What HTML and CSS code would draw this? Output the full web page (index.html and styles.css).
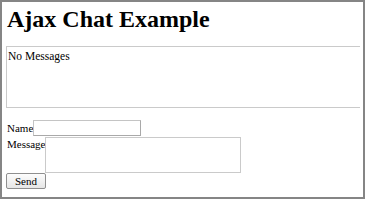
FILE: index.html
```html
<!DOCTYPE html>
<html lang="en">
  <head>
    <meta charset="UTF-8" />
    <title>Ajax Chat Example</title>
    <link rel="stylesheet" href="styles.css">
  </head>
  <body>
    <div class="frame">
      <h1 class="title">Ajax Chat Example</h1>
      <div id="messages" class="messages">No Messages</div>
      <form class="chat-form">
        <div class="row name-row">
          <label for="name">Name</label>
          <input type="text" id="name" name="name" />
        </div>
        <div class="row message-row">
          <label for="message">Message</label>
          <textarea id="message" name="message"></textarea>
        </div>
        <button type="button" class="send">Send</button>
      </form>
    </div>
  </body>
</html>
```

FILE: styles.css
```css
:root {
  --frame-color: #858585;
  --box-border: #cacaca;
  --input-border: #a9a9a9;
  --font-family: "Liberation Serif", "Times New Roman", serif;
}

body {
  margin: 0;
  font-family: var(--font-family);
  color: #000;
  background: #fff;
}

.frame {
  width: 365px;
  height: 199px;
  box-sizing: border-box;
  border: 2px solid var(--frame-color);
  padding: 3px 3px 0 4px;
}

.title {
  margin: 0 0 13px 1px;
  font-size: 24px;
  line-height: 28px;
  font-weight: bold;
}

.messages {
  height: 58px;
  border: 1px solid var(--box-border);
  border-right: none;
  padding: 2px 2px 0 1px;
  font-size: 11.5px;
  line-height: 14px;
}

.chat-form {
  margin: 12px 0 0 1px;
  font-size: 11px;
}

.row {
  display: flex;
}

.name-row {
  align-items: center;
  height: 16px;
}

.message-row {
  align-items: flex-start;
  margin-top: 1px;
}

.row label {
  line-height: 13px;
}

.message-row label {
  padding-top: 1px;
  margin-right: -1px;
}

#name {
  width: 108px;
  height: 16px;
  box-sizing: border-box;
  margin: 0;
  padding: 0 2px;
  border: 1px solid var(--input-border);
  border-top-color: #c4c4c4;
  border-left-color: #c4c4c4;
}

#message {
  width: 196px;
  height: 36px;
  box-sizing: border-box;
  margin: 0;
  padding: 1px;
  border: 1px solid var(--box-border);
  resize: none;
}

.send {
  display: block;
  width: 40px;
  height: 16px;
  margin: 0 0 0 -1px;
  padding: 0;
  font-family: var(--font-family);
  font-size: 11px;
  line-height: 13px;
  color: #000;
  border: 1px solid #8f8f8f;
  border-radius: 2px;
  background: linear-gradient(#fdfdfd, #e6e6e6);
}
```
